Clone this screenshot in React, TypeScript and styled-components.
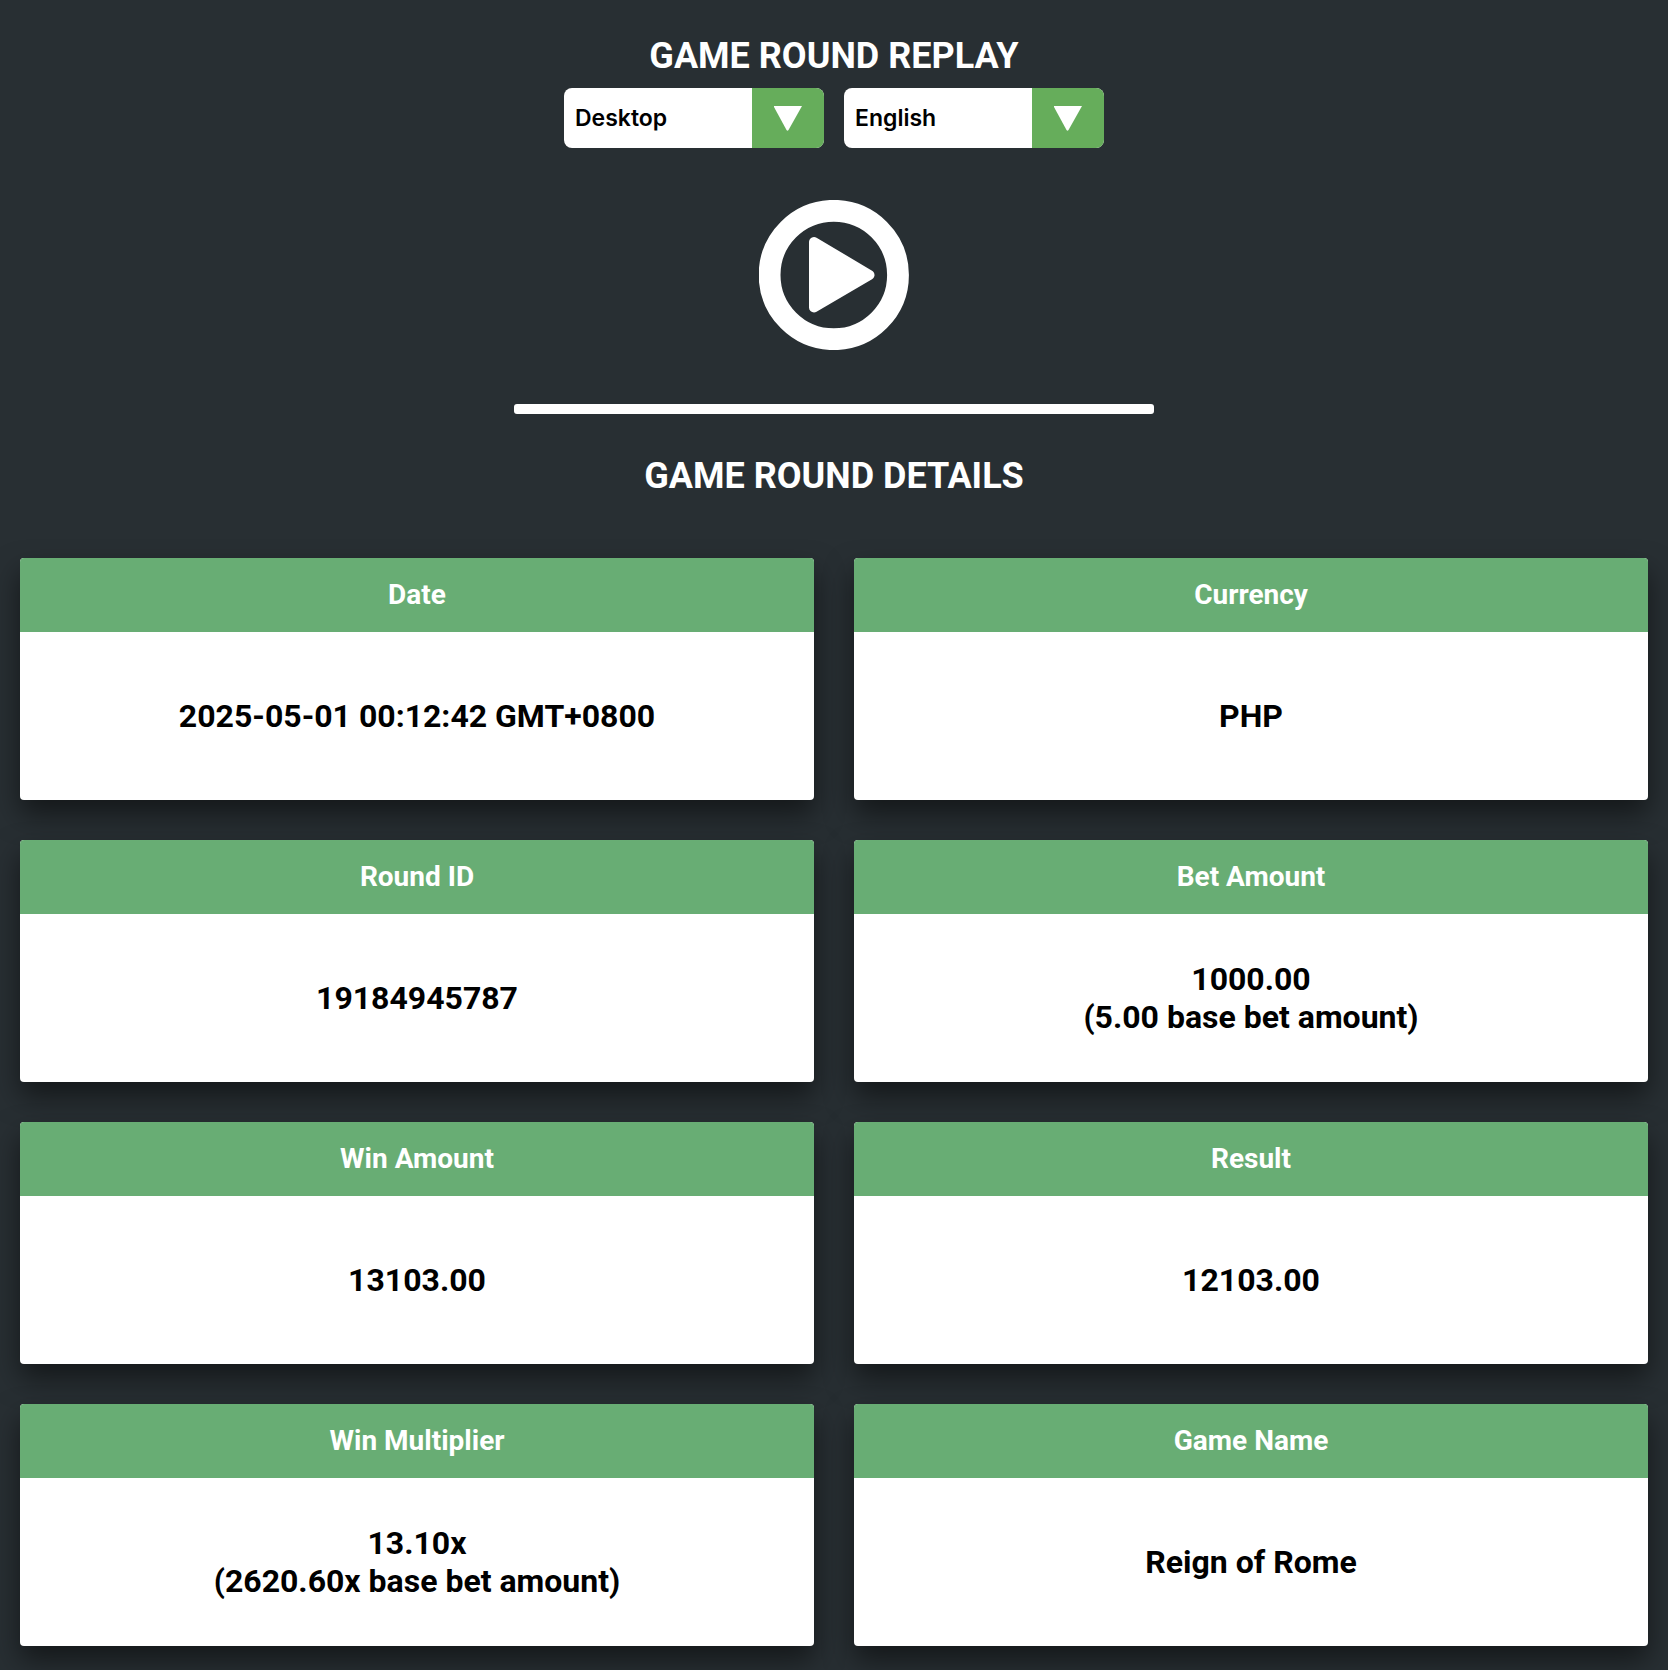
import React from "react";
import styled, { createGlobalStyle } from "styled-components";

const Global = createGlobalStyle`
  html, body { margin: 0; padding: 0; background: #282f33; }
  body { font-family: Roboto, "Liberation Sans", sans-serif; }
`;

const Page = styled.div`
  width: 1668px;
  height: 1670px;
  overflow: hidden;
  box-sizing: border-box;
  padding: 33px 20px 0;
  display: flex;
  flex-direction: column;
  align-items: center;
`;

const Title = styled.h1`
  margin: 0;
  color: #fff;
  font-size: 36px;
  line-height: 46px;
  font-weight: 700;
  text-align: center;
`;

const Selects = styled.div`
  display: flex;
  gap: 20px;
  margin-top: 9px;
`;

const Select = styled.div`
  width: 260px;
  height: 60px;
  border-radius: 8px;
  overflow: hidden;
  background: #fff;
  display: flex;
  align-items: center;
  justify-content: space-between;
  color: #000;
  font-family: Inter, Roboto, sans-serif;
  font-size: 23px;
  font-weight: 600;
  padding-left: 11px;
  box-sizing: border-box;
`;

const Arrow = styled.div`
  width: 72px;
  height: 100%;
  background: #66ad5b;
  display: flex;
  align-items: center;
  justify-content: center;
`;

const PlayButton = styled.svg`
  display: block;
  width: 151px;
  height: 150px;
  margin-top: 52px;
`;

const Progress = styled.div`
  width: 640px;
  height: 10px;
  margin-top: 54px;
  background: #fff;
  border-radius: 3px;
`;

const Subtitle = styled(Title)`
  margin-top: 39px;
`;

const Grid = styled.div`
  width: 100%;
  margin-top: 59px;
  display: grid;
  grid-template-columns: 794px 794px;
  grid-auto-rows: 242px;
  column-gap: 40px;
  row-gap: 40px;
`;

const Card = styled.section`
  display: flex;
  flex-direction: column;
  background: #fff;
  border-radius: 4px;
  overflow: hidden;
  box-shadow: 0 14px 28px rgba(0, 0, 0, 0.5);
`;

const CardHeader = styled.div`
  height: 74px;
  flex: none;
  box-sizing: border-box;
  padding-bottom: 2px;
  background: #68ad74;
  color: #fff;
  font-size: 28px;
  font-weight: 700;
  display: flex;
  align-items: center;
  justify-content: center;
`;

const CardBody = styled.div`
  flex: 1;
  display: flex;
  align-items: center;
  justify-content: center;
  text-align: center;
  color: #000;
  font-size: 32px;
  line-height: 38px;
  font-weight: 700;
`;

const ArrowIcon = () => (
  <svg width="29" height="25" viewBox="0 0 29 25">
    <path d="M-0.5 0H28L14.5 24Q13.5 25.4 12.5 24Z" fill="#fff" />
  </svg>
);

const cards: { label: string; lines: string[] }[] = [
  { label: "Date", lines: ["2025-05-01 00:12:42 GMT+0800"] },
  { label: "Currency", lines: ["PHP"] },
  { label: "Round ID", lines: ["19184945787"] },
  { label: "Bet Amount", lines: ["1000.00", "(5.00 base bet amount)"] },
  { label: "Win Amount", lines: ["13103.00"] },
  { label: "Result", lines: ["12103.00"] },
  { label: "Win Multiplier", lines: ["13.10x", "(2620.60x base bet amount)"] },
  { label: "Game Name", lines: ["Reign of Rome"] },
];

export default function App() {
  return (
    <Page>
      <Global />
      <Title>GAME ROUND REPLAY</Title>
      <Selects>
        {["Desktop", "English"].map((s) => (
          <Select key={s}>
            {s}
            <Arrow>
              <ArrowIcon />
            </Arrow>
          </Select>
        ))}
      </Selects>
      <PlayButton viewBox="0 0 151 150">
        <circle cx="74.8" cy="75" r="64.2" fill="none" stroke="#fff" strokeWidth="21.8" />
        <path
          d="M55 42V107.5L110.5 75Z"
          fill="#fff"
          stroke="#fff"
          strokeWidth="10"
          strokeLinejoin="round"
        />
      </PlayButton>
      <Progress />
      <Subtitle as="h2">GAME ROUND DETAILS</Subtitle>
      <Grid>
        {cards.map((c) => (
          <Card key={c.label}>
            <CardHeader>{c.label}</CardHeader>
            <CardBody>
              <div>
                {c.lines.map((l) => (
                  <div key={l}>{l}</div>
                ))}
              </div>
            </CardBody>
          </Card>
        ))}
      </Grid>
    </Page>
  );
}
